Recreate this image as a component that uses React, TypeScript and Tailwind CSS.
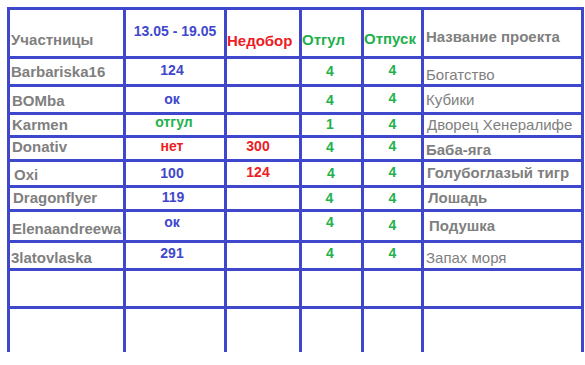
import React from 'react';

const BLUE = 'text-[#3f48cc]';
const RED = 'text-[#ed1c24]';
const GREEN = 'text-[#22b14c]';
const GRAY = 'text-[#7f7f7f]';

type Cell = { text?: string; cls?: string };

const Td: React.FC<Cell> = ({ text, cls }) => (
  <div className={`bg-white flex leading-none whitespace-nowrap ${cls ?? ''}`}>
    {text && <span>{text}</span>}
  </div>
);

const name = `${GRAY} font-bold text-[15px] pl-[1px]`;
const val = `font-bold text-[14px] justify-center`;
const four = `${GREEN} font-bold text-[14px] justify-center`;
const proj = `${GRAY} text-[15px] pl-[2px]`;
const projB = `${GRAY} font-bold text-[15px] pl-[2px]`;

const rows: Cell[][] = [
  [
    { text: 'Barbariska16', cls: `${name} pt-[5px]` },
    { text: '124', cls: `${BLUE} ${val} pt-[4px] pr-[6px]` },
    {},
    { text: '4', cls: `${four} pt-[5px] pr-[3px]` },
    { text: '4', cls: `${four} pt-[4px]` },
    { text: 'Богатство', cls: `${proj} pt-[8px]` },
  ],
  [
    { text: 'BOMba', cls: `${name} pt-[6px] pl-[2px]` },
    { text: 'ок', cls: `${BLUE} ${val} pt-[5px] pr-[6px]` },
    {},
    { text: '4', cls: `${four} pt-[6px] pr-[3px]` },
    { text: '4', cls: `${four} pt-[4px]` },
    { text: 'Кубики', cls: `${proj} pt-[5px]` },
  ],
  [
    { text: 'Karmen', cls: `${name} pt-[2px] pl-[2px]` },
    { text: 'отгул', cls: `${GREEN} ${val} pt-0 pr-[2px]` },
    {},
    { text: '1', cls: `${four} pt-[2px] pr-[3px]` },
    { text: '4', cls: `${four} pt-[2px]` },
    { text: 'Дворец Хенералифе', cls: `${proj} pt-[2px] pl-[3px]` },
  ],
  [
    { text: 'Donativ', cls: `${name} pt-[1px] pl-[2px]` },
    { text: 'нет', cls: `${RED} ${val} pt-[1px] pr-[6px]` },
    { text: '300', cls: `${RED} ${val} pt-[1px] pr-[10px]` },
    { text: '4', cls: `${four} pt-[2px] pr-[3px]` },
    { text: '4', cls: `${four} pt-[1px]` },
    { text: 'Баба-яга', cls: `${projB} pt-[4px] pl-[1px]` },
  ],
  [
    { text: 'Oxi', cls: `${name} pt-[5px] pl-[4px]` },
    { text: '100', cls: `${BLUE} ${val} pt-[4px] pr-[6px]` },
    { text: '124', cls: `${RED} ${val} pt-[3px] pr-[10px]` },
    { text: '4', cls: `${four} pt-[4px] pr-[1px]` },
    { text: '4', cls: `${four} pt-[3px]` },
    { text: 'Голубоглазый тигр', cls: `${projB} pt-[3px] pl-[3px]` },
  ],
  [
    { text: 'Dragonflyer', cls: `${name} pt-[2px] pl-[3px]` },
    { text: '119', cls: `${BLUE} ${val} pt-[2px] pr-[4px]` },
    {},
    { text: '4', cls: `${four} pt-[3px] pr-[4px]` },
    { text: '4', cls: `${four} pt-[3px]` },
    { text: 'Лошадь', cls: `${projB} pt-[2px] pl-[4px]` },
  ],
  [
    { text: 'Elenaandreewa', cls: `${name} pt-[9px] pl-[2px]` },
    { text: 'ок', cls: `${BLUE} ${val} pt-[3px] pr-[6px]` },
    {},
    { text: '4', cls: `${four} pt-[3px] pr-[3px]` },
    { text: '4', cls: `${four} pt-[6px]` },
    { text: 'Подушка', cls: `${projB} pt-[6px] pl-[5px]` },
  ],
  [
    { text: '3latovlaska', cls: `${name} pt-[7px] pl-0` },
    { text: '291', cls: `${BLUE} ${val} pt-[3px] pr-[6px]` },
    {},
    { text: '4', cls: `${four} pt-[3px] pr-[3px]` },
    { text: '4', cls: `${four} pt-[3px]` },
    { text: 'Запах моря', cls: `${proj} pt-[7px]` },
  ],
  [{}, {}, {}, {}, {}, {}],
  [{}, {}, {}, {}, {}, {}],
];

export default function App() {
  return (
    <div className="w-[585px] h-[365px] bg-white overflow-hidden font-['Liberation_Sans',Arial,sans-serif]">
      <div className="ml-[7px] mt-[7px] w-[577px] bg-[#3f48cc] grid grid-cols-[113px_98px_72px_59px_57px_157px] grid-rows-[46px_25px_25px_20px_21px_23px_21px_28px_25px_35px_43px] gap-[3px] pt-[3px] px-[3px]">
        <Td text="Участницы" cls={`${GRAY} font-bold text-[15px] pt-[22px] pl-[1px]`} />
        <Td text="13.05 - 19.05" cls={`${BLUE} font-bold text-[14px] justify-center pt-[14px]`} />
        <Td text="Недобор" cls={`${RED} font-bold text-[15px] pt-[23px]`} />
        <Td text="Отгул" cls={`${GREEN} font-bold text-[15px] pt-[22px]`} />
        <Td text="Отпуск" cls={`${GREEN} font-bold text-[15px] pt-[21px]`} />
        <Td text="Название проекта" cls={`${GRAY} font-bold text-[15px] pt-[19px] pl-[2px]`} />
        {rows.map((r, i) => r.map((c, j) => <Td key={`${i}-${j}`} text={c.text} cls={c.cls} />))}
      </div>
    </div>
  );
}
